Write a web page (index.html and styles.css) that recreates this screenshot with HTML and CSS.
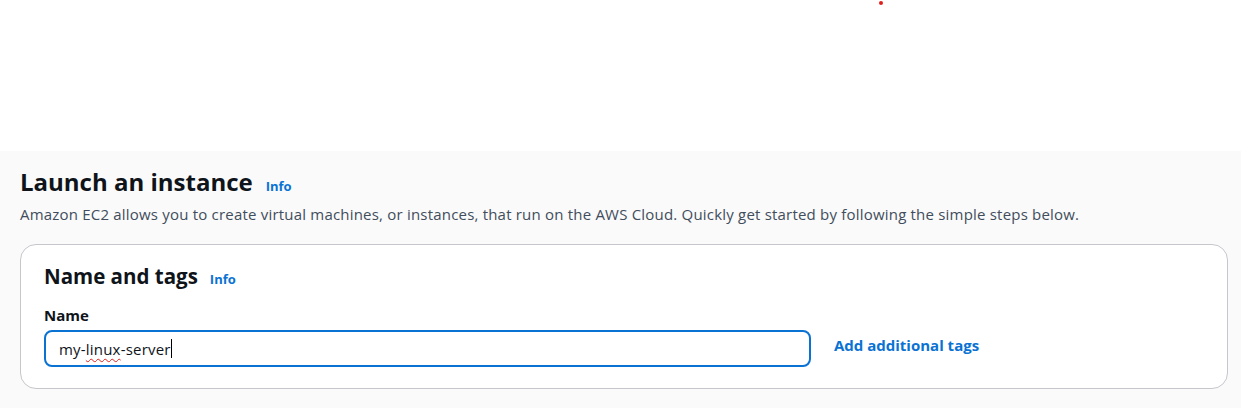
FILE: index.html
```html
<!DOCTYPE html>
<html>
<head>
<meta charset="utf-8">
<link rel="stylesheet" href="styles.css">
</head>
<body>
<div class="top">
  <span class="dot"></span>
</div>
<main class="content">
  <div class="page-head">
    <h1 class="title">Launch an instance</h1>
    <a class="info">Info</a>
  </div>
  <p class="desc">Amazon EC2 allows you to create virtual machines, or instances, that run on the AWS Cloud. Quickly get started by following the simple steps below.</p>
  <section class="card">
    <div class="card-head">
      <h2 class="card-title">Name and tags</h2>
      <a class="info">Info</a>
    </div>
    <label class="label">Name</label>
    <div class="row">
      <div class="input"><span class="val">my-<span class="squig">linux</span>-server</span><span class="caret"></span></div>
      <a class="add">Add additional tags</a>
    </div>
  </section>
</main>
</body>
</html>
```
FILE: styles.css
```css
* { box-sizing: border-box; }
html, body { margin: 0; padding: 0; background: #fafafa; }
body { font-family: "Open Sans", "Noto Sans", sans-serif; color: #0f141a; }
.top { height: 151px; background: #ffffff; position: relative; }
.dot { position: absolute; left: 879px; top: 1px; width: 4px; height: 4px; border-radius: 50%; background: #e0201c; }
.content { padding: 14px 13px 20px 20px; }
.page-head { display: flex; align-items: baseline; gap: 13px; }
.title { margin: 0; font-size: 24px; font-weight: 700; line-height: 34px; letter-spacing: 0; }
.info { color: #0972d3; font-weight: 700; font-size: 13px; }
.desc { margin: 5px 0 0; font-size: 15px; letter-spacing: 0.2px; line-height: 20px; color: #414d5c; }
.card { margin-top: 20px; background: #fff; border: 1px solid #c6c6cd; border-radius: 16px; padding: 16px 23px 21px; }
.card-head { display: flex; align-items: baseline; gap: 12px; }
.card-title { margin: 0; font-size: 20.5px; font-weight: 700; line-height: 30px; letter-spacing: 0; }
.label { display: block; margin-top: 13px; font-size: 15px; font-weight: 700; line-height: 22px; }
.row { display: flex; align-items: center; gap: 23px; margin-top: 4px; }
.input { width: 767px; height: 37px; border: 2px solid #0972d3; border-radius: 8px; padding: 0 13px; display: flex; align-items: center; font-size: 15px; letter-spacing: 0.2px; color: #0f141a; }
.squig { text-decoration: underline wavy #e0201c; text-decoration-thickness: 1px; text-underline-offset: 3px; }
.caret { display: inline-block; width: 1.5px; height: 19px; background: #000; }
.add { color: #0972d3; font-weight: 700; font-size: 15px; line-height: 20px; padding-bottom: 7px; }
```
